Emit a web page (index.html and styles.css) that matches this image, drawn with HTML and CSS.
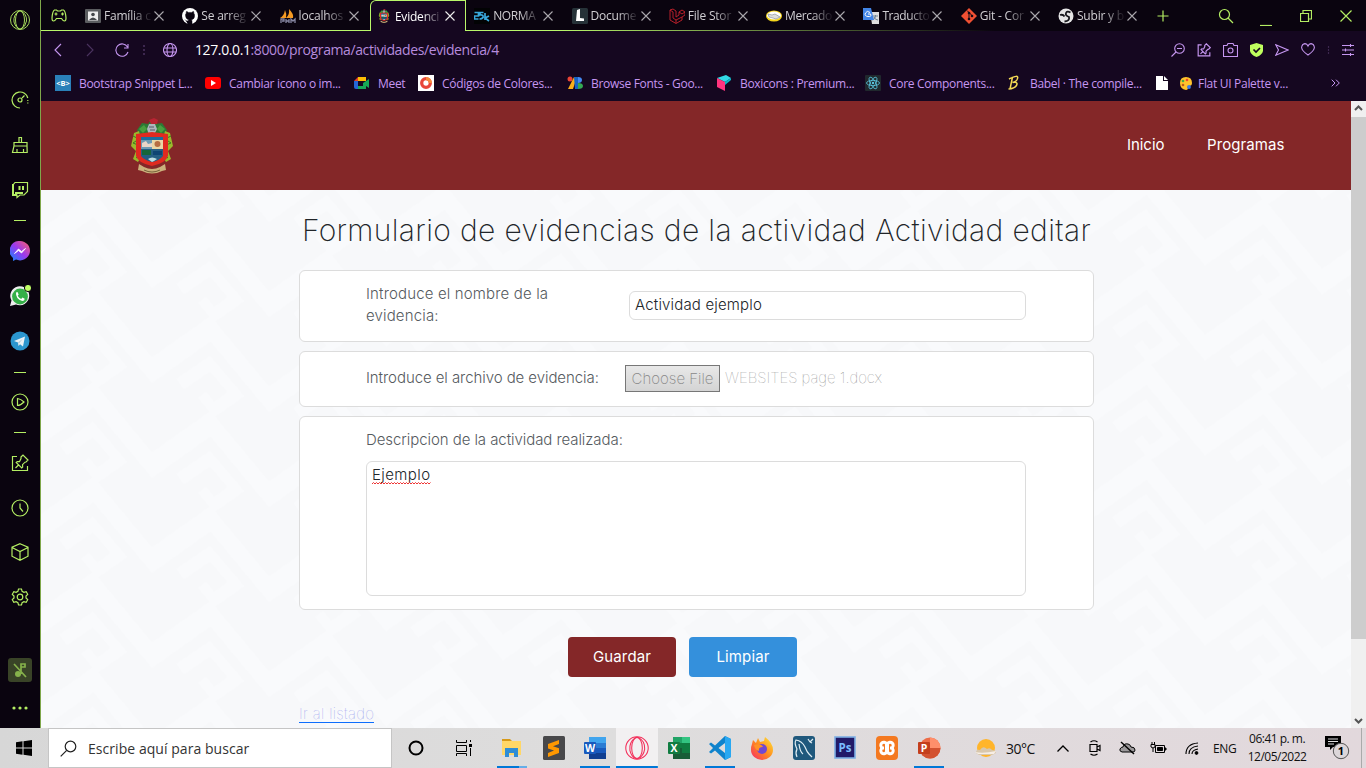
FILE: index.html
```html
<!DOCTYPE html>
<html lang="es">
<head>
<meta charset="utf-8">
<title>Evidencias</title>
<link rel="stylesheet" href="styles.css">
</head>
<body>
<svg class="defs" width="0" height="0">
  <defs>
    <symbol id="x" viewBox="0 0 12 12"><path d="M1.5 1.5l9 9M10.500 1.500l-9 9"/></symbol>
    <symbol id="pin" viewBox="0 0 18 18"><path d="M6 2.500H1.500v14h15V12M10 3l2-2 5 5-2 2-1 .2-2.500 2.500.2 2.300-1 1-5.500-5.500 1-1 2.300.2L10 4.500zM8 10.500l-3.500 3.500"/></symbol>
    <linearGradient id="msg" x1="0" y1="1" x2="1" y2="0"><stop offset="0" stop-color="#0a8dff"/><stop offset=".5" stop-color="#9a38ef"/><stop offset="1" stop-color="#ff6265"/></linearGradient>
    <linearGradient id="ff" x1="1" y1="0" x2="0" y2="1"><stop offset="0" stop-color="#ffe93b"/><stop offset=".5" stop-color="#ff8a1e"/><stop offset="1" stop-color="#f5246b"/></linearGradient>
    <symbol id="crest" viewBox="0 0 42 56">
      <path d="M6 12L11 5l6 1 4-5 4 5 6-1 5 7-4 6H9z" fill="#2c7a35"/>
      <path d="M8 11l5-4 3 4-4 4zM34 11l-5-4-3 4 4 4z" fill="#49a03f"/>
      <path d="M3 15l5-2 2 8-3 9 3 9-3 5-5-3 3-8-5-5zM39 15l-5-2-2 8 3 9-3 9 3 5 5-3-3-8 5-5z" fill="#9bb82c"/>
      <path d="M2 18l6 3-6 4 5 2M40 18l-6 3 6 4-5 2M5 40l4-3M37 40l-4-3" stroke="#3e7b22" fill="none"/>
      <path d="M18 2l5-2 4 2-1 4h-6z" fill="#b92432"/><path d="M18 6h6l2 5-3 6h-5l-2-6z" fill="#aeb6bd"/><path d="M18 9h5M19 12h5" stroke="#555a66"/>
      <path d="M5 16l16-2 16 2v22q-2 7-16 10Q7 45 5 38z" fill="#df2a20"/>
      <path d="M10 19h22v19q-4 5-11 6-8-2-11-6z" fill="#245e83"/>
      <path d="M10 20h11v11H10z" fill="#6c9ab3"/><path d="M21 21h11v10H21z" fill="#e9d7a5"/><path d="M10 19h22v3H10z" fill="#1c6c9e"/><path d="M11 25l4-2 2 3 4-1v4H11z" fill="#e8d5c7"/>
      <circle cx="26.500" cy="26" r="3" fill="#b66e42"/><path d="M11 32h9v5H11z" fill="#17663a"/><path d="M22 33h9v4h-9z" fill="#0e4573"/><path d="M17 41q4-3 9 0l-3 2-2 1z" fill="#bcdde2"/>
      <path d="M8 46l5 3q8 4 16 0l5-3 1 6-4 1q-10 5-20 0l-4-1z" fill="#cbb17c"/><path d="M13 52q8 4 16 0" stroke="#75613b" fill="none"/>
    </symbol>
    <symbol id="opera" viewBox="0 0 22 22"><circle cx="11" cy="11" r="9.500"/><ellipse cx="11" cy="11" rx="4.500" ry="9"/><path d="M10 2q-6 4-5 11 1 5 5 7M12 2q6 3 5.500 10-1 6-5.500 8"/></symbol>
  </defs>
</svg>
<div class="screen">
  <div class="browser">
    <aside class="side">
      <svg class="ic thin" width="22" height="22"><use href="#opera"/></svg>
      <span></span>
      <svg class="ic" width="18" height="18" viewBox="0 0 18 18"><path d="M9 17A8 8 0 1 1 16.800 7M11 7l2.500-2.500"/><circle cx="9" cy="9" r="2"/><path d="M16.800 9v5" stroke-dasharray="1 1.500"/></svg>
      <svg class="ic" width="18" height="18" viewBox="0 0 18 18"><path d="M3 6.500h13V10l.2 6.500H1.500L3 10zM3 10h13M8 6V1.500h2.500V6M6 16v-3M12.500 16v-3"/></svg>
      <svg class="ic" width="18" height="18" viewBox="0 0 18 18"><path d="M4 1.500h12.500v9L13 14H9l-3 2.500V14H2V4z"/><path d="M2 3v11h4M8.500 5v4M12 5v4M4 12h8" stroke-width="2"/></svg>
      <i class="sep"></i>
      <svg width="20" height="20" viewBox="0 0 20 20"><path d="M10 0a10 9.700 0 1 1-4 18.600L3 20v-3A9.700 9.700 0 0 1 10 0z" fill="url(#msg)"/><path d="M4.500 12.500L8.500 8l3 2.500 4-3L11.500 12l-3-2.500z" fill="#fff" stroke="#fff" stroke-width=".8"/></svg>
      <svg width="22" height="22" viewBox="0 0 22 22"><path d="M1 21l1.500-5.500A9.500 9.500 0 1 1 7 19.500z" fill="#eee"/><circle cx="11" cy="11.500" r="7.900" fill="#35b048"/><path d="M7 7.500l1.500-.5 1.200 2.500-1 1.200q1.200 2.200 3.500 3.200l1.200-1.300 2.300 1.200q0 2.200-2.500 2.200-6.700-2-6.200-8.500z" fill="#fff"/><circle cx="19" cy="3" r="3.600" fill="#c0ff66" stroke="#0a040f"/></svg>
      <svg width="20" height="20" viewBox="0 0 20 20"><circle cx="10" cy="10" r="9.500" fill="#2b96cf"/><path d="M4 10l11-4.500-2 10-3-2.200L8.500 15 8 11.500z" fill="#e9f2f7"/><path d="M8 11.500l5-4-4 5" fill="#b7ccda"/></svg>
      <i class="sep"></i>
      <svg class="ic" width="18" height="18" viewBox="0 0 18 18"><circle cx="9" cy="9" r="8"/><path d="M6.500 5.500v7q3 0 6.500-3.500-3-3-6.500-3.500z"/></svg>
      <i class="sep"></i>
      <svg class="ic" width="18" height="18"><use href="#pin"/></svg>
      <svg class="ic" width="18" height="18" viewBox="0 0 18 18"><circle cx="9" cy="9" r="8"/><path d="M9 4.500V9l3 3.500"/></svg>
      <svg class="ic" width="18" height="18" viewBox="0 0 18 18"><path d="M9 .7l8 3.500v9L9 17.300 1 13.200v-9zM1 4.500l8 4 8-4M9 8.500V17"/></svg>
      <svg class="ic" width="18" height="18" viewBox="0 0 18 18"><path d="M7.500 1h3l.6 2.300 1.800 1 2.300-.6 1.500 2.600L15 8v2l1.700 1.700-1.500 2.600-2.300-.6-1.800 1-.6 2.300h-3l-.6-2.300-1.800-1-2.300.6-1.500-2.600L3 10V8L1.300 6.300l1.500-2.600 2.300.6 1.800-1z"/><circle cx="9" cy="9" r="2.800"/></svg>
      <span></span>
      <div class="mute"><svg width="16" height="16" viewBox="0 0 16 16"><circle cx="6" cy="12" r="3" fill="#86b14b"/><path d="M9 12V2h4v3H9M2 2l12 13" stroke="#86b14b" stroke-width="1.700" fill="none"/></svg></div>
      <svg width="18" height="4" viewBox="0 0 18 4" fill="#b4ee63"><circle cx="3" cy="2" r="1.600"/><circle cx="9" cy="2" r="1.600"/><circle cx="15" cy="2" r="1.600"/></svg>
    </aside>
    <main class="window">
      <div class="tabs">
        <svg class="ic pad" width="16" height="14" viewBox="0 0 16 14"><path d="M3.500 1h2l1 1h3l1-1h2q2 1 2.500 8 0 3-1.500 3-1.500 0-3-2.500h-5Q4 12 2.500 12 1 12 1 9 1.500 2 3.500 1zM3.500 5h3M5 3.500v3M10 5h3M11.500 3.500v3"/></svg>
        <div class="tab"><svg width="16" height="16" viewBox="0 0 16 16"><rect y="1" width="16" height="14" rx="1" fill="#5b5d60"/><rect x="3" y="3.500" width="10" height="9" fill="#eee"/><circle cx="8" cy="6.500" r="1.800" fill="#44474a"/><path d="M4 12q4-5 8 0z" fill="#44474a"/></svg><span>Família c</span><svg class="x"><use href="#x"/></svg></div>
        <div class="tab"><svg width="16" height="16" viewBox="0 0 16 16"><circle cx="8" cy="8" r="8" fill="#fff"/><path d="M6 16v-3q-2 .5-3-1.500M10 16v-3l-.5-1.200Q13 11 12.500 7q0-1-.8-1.800.2-1-.1-1.700-1 0-1.800.9H6.300Q5.500 3.500 4.400 3.500q-.3.700-.1 1.700Q3.500 6 3.500 7q0 4 3.200 4.800L6 13v3z" fill="#0a0410" stroke="#0a0410" stroke-width=".5"/></svg><span>Se arreg</span><svg class="x"><use href="#x"/></svg></div>
        <div class="tab"><svg width="16" height="16" viewBox="0 0 16 16"><path d="M0 10q4-2 5-8 2 4 1 8zM6 10q4-4 3-9 5 5 4 9z" fill="#f59a23"/><path d="M1 15v-4h3v2H2M6 15v-4v2h3v-2 4M11 15v-4l2 2 2-2v4" stroke="#8787a2" fill="none" stroke-width="1.300"/></svg><span>localhos</span><svg class="x"><use href="#x"/></svg></div>
        <div class="tab active"><svg width="16" height="16"><use href="#crest" y="1" height="14"/></svg><span>Evidenci</span><svg class="x"><use href="#x"/></svg></div>
        <div class="tab"><svg width="16" height="16" viewBox="0 0 16 16"><rect width="16" height="16" fill="#020304"/><path d="M.5 4.500h4v3.500h-4v3h4M9.500 4.500H6V7q3.500-.5 3 2-.5 2-3.500 2M11 5v7M15 8l-4 2 4 3" fill="none" stroke="#39a9dc" stroke-width="1.700"/></svg><span class="tight">NORMA</span><svg class="x"><use href="#x"/></svg></div>
        <div class="tab"><svg width="16" height="16" viewBox="0 0 16 16"><rect width="16" height="16" rx="1.500" fill="#263238"/><path d="M5 2l3-1v9l4 .5V13H4z" fill="#fff"/></svg><span>Docume</span><svg class="x"><use href="#x"/></svg></div>
        <div class="tab"><svg width="16" height="16" viewBox="0 0 16 16"><path d="M1 2l3-1 3 2v6l3-2V4l3-2 3 2v3l-3 2v3l-6 3.500L1 12zM1 2l3 2v6l3 2 6-3M10 4l3 2 3-2M7 12v3" fill="none" stroke="#c9232c" stroke-width=".9"/></svg><span>File Stor</span><svg class="x"><use href="#x"/></svg></div>
        <div class="tab"><svg width="16" height="16" viewBox="0 0 16 16"><ellipse cx="8" cy="8" rx="8" ry="5.500" fill="#f5d51b"/><ellipse cx="8" cy="7.500" rx="7" ry="4" fill="#fff"/><path d="M2 6l4 1 3-1 5 3-4 2-3-1-4-1z" fill="#dedede" stroke="#7b858e" stroke-width=".6"/></svg><span class="tight">Mercado</span><svg class="x"><use href="#x"/></svg></div>
        <div class="tab"><svg width="16" height="16" viewBox="0 0 16 16"><path d="M7 4h9v12H9z" fill="#dedede"/><path d="M10 8h5M12.500 7v1q0 3-3 4M11 9q1 3 4 3" stroke="#718494" fill="none"/><path d="M0 0h8l3 12H0z" fill="#4285e8"/><path d="M7 4.500Q4 2 2.500 5T5 8.500 7.500 6H5" stroke="#fff" fill="none"/></svg><span class="tight">Traducto</span><svg class="x"><use href="#x"/></svg></div>
        <div class="tab"><svg width="16" height="16" viewBox="0 0 16 16"><path d="M8 0l8 8-8 8-8-8z" fill="#f05033"/><path d="M6 2.500l5.500 5.500M8 5v7" stroke="#140c17"/><g fill="#140c17"><circle cx="8" cy="5" r="1.300"/><circle cx="8" cy="11" r="1.300"/><circle cx="11" cy="8" r="1.300"/></g></svg><span>Git - Cor</span><svg class="x"><use href="#x"/></svg></div>
        <div class="tab"><svg width="16" height="16" viewBox="0 0 16 16"><circle cx="8" cy="8" r="7.500" fill="#e6e6e6"/><path d="M12.500 4.500Q9 2.500 8 5t3 4q1 4-4.500 4.500M2 7q3-1 4.500 1.500" fill="none" stroke="#17171c" stroke-width="1.800"/></svg><span>Subir y b</span><svg class="x"><use href="#x"/></svg></div>
        <div class="controls ic">
          <svg width="12" height="12" viewBox="0 0 12 12"><path d="M6 .5v11M.5 6h11"/></svg>
          <svg width="16" height="16" viewBox="0 0 16 16"><circle cx="6.500" cy="6.500" r="5"/><path d="M10 10l5 5"/></svg>
          <svg width="12" height="12" viewBox="0 0 12 12"><path d="M0 11.500h12"/></svg>
          <svg width="12" height="12" viewBox="0 0 12 12"><path d="M.5 3.500h8v8h-8zM3 3.500v-3h8.500V9h-3"/></svg>
          <svg width="12" height="12" viewBox="0 0 12 12"><path d="M.5.5l11 11M11.500.5l-11 11"/></svg>
        </div>
      </div>
      <div class="address">
        <svg width="8" height="14" viewBox="0 0 8 14"><path d="M7 1L1 7l6 6"/></svg>
        <svg class="dim" width="8" height="14" viewBox="0 0 8 14"><path d="M1 1l6 6-6 6"/></svg>
        <svg width="14" height="14" viewBox="0 0 14 14"><path d="M12.500 4A6.200 6.200 0 1 0 13 9M13 1v4H9"/></svg>
        <svg class="dim" width="4" height="12" viewBox="0 0 4 12"><path d="M2 1v10" stroke-width="1.500" stroke-dasharray="2 2"/></svg>
        <svg width="14" height="14" viewBox="0 0 14 14"><circle cx="7" cy="7" r="6.500"/><ellipse cx="7" cy="7" rx="3" ry="6.500"/><path d="M1 5h12M1 9h12"/></svg>
        <span class="url"><b>127.0.0.1</b>:8000/programa/actividades/evidencia/4</span>
        <div class="tools">
          <svg width="14" height="14" viewBox="0 0 14 14"><circle cx="8.500" cy="5.500" r="4.800"/><path d="M5 9L.5 13.500M6 5.500h5"/></svg>
          <svg class="bold" width="14" height="14"><use href="#pin"/></svg>
          <svg width="15" height="14" viewBox="0 0 15 14"><path d="M.5 2.500H4L5 .5h5l1 2h3.500v11H.500z"/><circle cx="7.500" cy="7.500" r="2.500"/></svg>
          <svg width="13" height="14" viewBox="0 0 13 14"><path d="M6.500 0L13 2v6q-1 4-6.500 6Q1 12 0 8V2z" fill="#c0ff5e" stroke="none"/><path d="M3.500 6.500L6 9l4-4" stroke="#150720" stroke-width="1.700"/></svg>
          <svg width="14" height="12" viewBox="0 0 14 12"><path d="M.8.8L13 6 .8 11.200 3.500 6z"/></svg>
          <svg width="14" height="13" viewBox="0 0 14 13"><path d="M7 12Q1 8 .6 4.500 1 1 4 .6 6 .7 7 3 8 .7 10 .6q3 .4 3.400 3.900Q13 8 7 12z"/></svg>
          <svg class="dim" width="3" height="12" viewBox="0 0 4 12"><path d="M2 1v10" stroke-width="1.500" stroke-dasharray="2 2"/></svg>
          <svg width="12" height="12" viewBox="0 0 12 12"><path d="M0 1.500h12M0 6h12M0 10.500h12M8.500 0v3M3.500 4.500v3M8.500 9v3"/></svg>
        </div>
      </div>
      <div class="marks">
        <div class="mark w150"><svg width="16" height="16" viewBox="0 0 16 16"><rect width="16" height="16" fill="#2a80b9"/><text x="8" y="11" text-anchor="middle" font-size="7.500" letter-spacing="0" font-weight="bold" fill="#fff">&lt;B&gt;</text></svg><span>Bootstrap Snippet L...</span></div>
        <div class="mark w149"><svg width="16" height="16" viewBox="0 0 16 16"><rect y="2" width="16" height="12" rx="3" fill="#f00"/><path d="M6 5l5 3-5 3z" fill="#fff"/></svg><span>Cambiar icono o im...</span></div>
        <div class="mark w64"><svg width="16" height="16" viewBox="0 0 16 16"><path d="M0 6l4-4v4z" fill="#e33e2b"/><path d="M4 2h8v4H4z" fill="#fbbc04"/><path d="M0 6h4v8H2q-2 0-2-2z" fill="#2467d6"/><path d="M4 11h5V8l6-4v9l-3-2v3H4z" fill="#16a857"/></svg><span>Meet</span></div>
        <div class="mark w149b"><svg width="16" height="16" viewBox="0 0 16 16"><rect width="16" height="16" fill="#fff"/><circle cx="8" cy="8" r="4.300" fill="none" stroke="#e8463a" stroke-width="3.300"/><path d="M8 3.700a4.300 4.300 0 0 1 4.300 4.300" stroke="#f58a3b" stroke-width="3.300" fill="none"/></svg><span>Códigos de Colores...</span></div>
        <div class="mark w149"><svg width="16" height="16" viewBox="0 0 16 16"><circle cx="3" cy="4" r="2.500" fill="#ea4335"/><path d="M7 2h3L6 14H1z" fill="#fbaf19"/><path d="M7 2h4v12H8z" fill="#1764c5"/><path d="M11 2q4 0 4 3t-4 3z" fill="#448af3"/><path d="M11 8q5 0 5 3t-5 3z" fill="#34a853"/></svg><span>Browse Fonts - Goo...</span></div>
        <div class="mark w149"><svg width="16" height="16" viewBox="0 0 16 16"><path d="M1 3l9-3 5 3-6 4z" fill="#31d9e5"/><path d="M1 3l8 4v9l-8-4z" fill="#ff347e"/><path d="M9 7l6-4v2L9 10z" fill="#0bb7c4"/></svg><span>Boxicons : Premium...</span></div>
        <div class="mark w141"><svg width="16" height="16" viewBox="0 0 16 16"><rect width="16" height="16" rx="1" fill="#20282d"/><g fill="none" stroke="#5bc6e0" stroke-width=".8"><ellipse cx="8" cy="8" rx="6.500" ry="2.600"/><ellipse cx="8" cy="8" rx="6.500" ry="2.600" transform="rotate(60 8 8)"/><ellipse cx="8" cy="8" rx="6.500" ry="2.600" transform="rotate(120 8 8)"/></g><circle cx="8" cy="8" r="1.200" fill="#5bc6e0"/></svg><span>Core Components...</span></div>
        <div class="mark w147"><svg width="16" height="16" viewBox="0 0 16 16"><path d="M6.500 2L4 14M3 4q10-5 8.500-.5-.5 3-5 4 6-1 4 3-2 3-8 3.500" stroke="#f5da55" stroke-width="1.500" fill="none"/></svg><span>Babel · The compile...</span></div>
        <div class="mark w25"><svg width="12" height="14" viewBox="0 0 12 14"><path d="M0 0h7v5h5v9H0zM8 0l4 4H8z" fill="#fff"/></svg></div>
        <div class="mark grow"><svg width="12" height="13" viewBox="0 0 12 13"><path d="M6 0q6 0 6 6 0 3-3 3-2 0-1 3-1 1-2 1Q0 12 0 6T6 0z" fill="#ffc22b"/><circle cx="3" cy="4" r="1.300" fill="#44ac46"/><circle cx="7" cy="3" r="1.300" fill="#e84632"/><circle cx="3" cy="8" r="1.300" fill="#bd5a1d"/><circle cx="9" cy="10" r="1.900" fill="#3b7de6"/></svg><span>Flat UI Palette v...</span></div>
        <svg class="more" width="9" height="8" viewBox="0 0 9 8"><path d="M.7.7L4 4 .7 7.300M5 .7L8.300 4 5 7.300"/></svg>
      </div>
      <div class="view">
        <div class="page">
          <svg class="pattern" width="1310" height="538">
            <defs><pattern id="greca" width="117" height="95" patternUnits="userSpaceOnUse" patternTransform="translate(-6 -8) skewY(14)">
              <rect width="117" height="95" fill="#f7f8fa"/>
              <g fill="none" stroke="#f9fafc" stroke-width="19"><path d="M-58.500 8L0 64 58.500 8 117 64 175.500 8M-58.500 103L0 159 58.500 103 117 159 175.500 103M-58.500-87L0-31 58.500-87 117-31 175.500-87"/><path d="M28 71L58 43 84 67 62 88 50 76" stroke-width="12"/></g>
            </pattern></defs>
            <rect width="1310" height="538" fill="url(#greca)"/>
          </svg>
          <nav class="nav"><svg width="42" height="56"><use href="#crest"/></svg><a class="n1">Inicio</a><a class="n2">Programas</a></nav>
          <form class="form">
            <h1><span>Formulario de evidencias de la actividad Actividad editar</span></h1>
            <section class="card c1"><label><span class="l1">Introduce el nombre de la</span><br><span class="l1">evidencia:</span></label><div class="input"><span>Actividad ejemplo</span></div></section>
            <section class="card c2"><label><span class="l3">Introduce el archivo de evidencia:</span></label><div class="choose"><span>Choose File</span></div><span class="file">WEBSITES page 1.docx</span></section>
            <section class="card c3"><label><span class="l3">Descripcion de la actividad realizada:</span></label><div class="area"><span class="typo">Ejemplo<svg width="60" height="3"><path d="M0 2l1.500-1.500L3 2l1.500-1.500L6 2l1.500-1.500L9 2l1.500-1.500L12 2l1.500-1.500L15 2l1.500-1.500L18 2l1.500-1.500L21 2l1.500-1.500L24 2l1.500-1.500L27 2l1.500-1.500L30 2l1.500-1.500L33 2l1.500-1.500L36 2l1.500-1.500L39 2l1.500-1.500L42 2l1.500-1.500L45 2l1.500-1.500L48 2l1.500-1.500L51 2l1.500-1.500L54 2l1.500-1.500L57 2l1.500-1.500" fill="none" stroke="#e33"/></svg></span></div></section>
            <div class="buttons"><div class="btn save"><span>Guardar</span></div><div class="btn clear"><span>Limpiar</span></div></div>
            <a class="list">Ir al listado</a>
          </form>
        </div>
        <div class="scroll"><svg width="15" height="16" viewBox="0 0 15 16"><path d="M4 9l3.500-3.500L11 9"/></svg><div class="thumb"></div><svg width="15" height="16" viewBox="0 0 15 16"><path d="M4 7l3.500 3.500L11 7"/></svg></div>
      </div>
    </main>
  </div>
  <footer class="task">
    <div class="cell start"><svg width="16" height="16" viewBox="0 0 16 16"><path d="M0 2.300L6.500 1.300v6.200H0zM7.500 1.200L16 0v7.500H7.500zM0 8.500h6.500v6.200L0 13.700zM7.500 8.500H16V16l-8.500-1.200z"/></svg></div>
    <div class="find"><svg width="17" height="17" viewBox="0 0 17 17"><circle cx="10.500" cy="6.500" r="5.300"/><path d="M6.700 10.300L.7 16.300"/></svg><span>Escribe aquí para buscar</span></div>
    <div class="cell"><svg width="16" height="16" viewBox="0 0 16 16"><circle cx="8" cy="8" r="6.500" fill="none" stroke="#000" stroke-width="2"/></svg></div>
    <div class="cell views"><svg class="line" width="16" height="16" viewBox="0 0 16 16"><path d="M.5 0v2.500h10V0M.5 5.500h10v6H.500zM.5 16v-2.500h10V16M14.500 0v2M14.500 8v8"/><path d="M13 4h3v3h-3z" fill="#000" stroke="none"/></svg></div>
    <div class="cell run exp"><svg width="22" height="20" viewBox="0 0 22 20"><path d="M1 1h8l2 2H1z" fill="#d79a19"/><path d="M1 3h19v14H1z" fill="#ffd767"/><path d="M4 10h13v9h-4v-4H8v4H4z" fill="#2f8dd5"/></svg></div>
    <div class="cell"><svg width="24" height="24" viewBox="0 0 24 24"><rect x="1" width="22" height="24" rx="1.500" fill="#48484a"/><path d="M6 8l11-4v4l-6 2.300 6 2V17L6 21v-4l6-2.500-6-2z" fill="#ff9800"/></svg></div>
    <div class="cell run"><svg width="22" height="22" viewBox="0 0 22 22"><path d="M5 0h17v6H5z" fill="#41a5ee"/><path d="M5 6h17v5H5z" fill="#2b7cd3"/><path d="M5 11h17v5H5z" fill="#185abd"/><path d="M5 16h17v6H5z" fill="#103f91"/><rect y="5" width="12" height="12" rx="1" fill="#185abd"/><text x="6" y="15" font-size="10.500" text-anchor="middle" font-weight="bold" fill="#fff">W</text></svg></div>
    <div class="cell run current"><svg class="red" width="26" height="26"><use href="#opera"/></svg></div>
    <div class="cell"><svg width="22" height="22" viewBox="0 0 22 22"><path d="M5 0h17v6H5z" fill="#33c481"/><path d="M5 0h9v6H5z" fill="#21a366"/><path d="M5 6h17v5H5z" fill="#107c41"/><path d="M5 11h17v5H5z" fill="#185c37"/><path d="M14 11h8v5h-8z" fill="#107c41"/><path d="M5 16h17v6H5z" fill="#185c37"/><rect y="5" width="12" height="12" rx="1" fill="#107c41"/><text x="6" y="15" font-size="10.500" text-anchor="middle" font-weight="bold" fill="#fff">X</text></svg></div>
    <div class="cell run"><svg width="24" height="24" viewBox="0 0 24 24"><path d="M17 0L7 9.500 3 6.500 1 8l4 4-4 4 2 1.500 4-3L17 24l6-3V3zM17 7v10l-6.500-5z" fill="#0f83cc" fill-rule="evenodd"/><path d="M17 0l6 3v18l-6 3z" fill="#29a8f2"/></svg></div>
    <div class="cell"><svg width="24" height="24" viewBox="0 0 24 24"><path d="M2 8l1-4 3 3 2-5 2 4 4-1 1-4q8 6 8 13a11 10 0 0 1-22 0q0-4 1-6z" fill="url(#ff)"/><circle cx="12" cy="13" r="5" fill="#7048d2"/><path d="M4 9q7-2 9 2-5 0-4 4-4-1-5-6z" fill="#ff9227"/></svg></div>
    <div class="cell"><svg width="24" height="24" viewBox="0 0 24 24"><rect x="1" width="22" height="24" rx="3" fill="#1f587c"/><path d="M5 21Q3 17 5 13 2 7 4 4q6 1 9 7 2 5 4 7l3 3M7 8q1 8 4 10M16 3l2 3M21 3l-3 3M18 6l2 1" fill="none" stroke="#dfedf3" stroke-width="1.200"/></svg></div>
    <div class="cell"><svg width="22" height="24" viewBox="0 0 22 24"><rect x="1" y="1" width="20" height="21" fill="#211a68" stroke="#7eafe4" stroke-width="1.600"/><text x="11" y="16" font-size="11.500" text-anchor="middle" font-weight="bold" fill="#79bcff">Ps</text></svg></div>
    <div class="cell"><svg width="24" height="24" viewBox="0 0 24 24"><rect x="1" width="22" height="24" rx="4" fill="#f47920"/><g fill="none" stroke="#fff" stroke-width="3"><path d="M9 12H7.500a3 3 0 1 1 4-4v2.500h1V8a3 3 0 1 1 4 4H15M9 12H7.500a3 3 0 1 0 4 4v-2.500h1V16a3 3 0 1 0 4-4"/></g></svg></div>
    <div class="cell run"><svg width="24" height="24" viewBox="0 0 24 24"><circle cx="13" cy="12" r="10.500" fill="#ed6c47"/><path d="M13 1.500A10.500 10.500 0 0 1 23.500 12H13z" fill="#ff8f6b"/><path d="M2.500 12h21a10.500 10.500 0 0 1-21 0z" fill="#d35230"/><rect x="1" y="6" width="12" height="12" rx="1" fill="#c43e1c"/><text x="7" y="16" font-size="10.500" text-anchor="middle" font-weight="bold" fill="#fff">P</text></svg></div>
    <div class="cell weather"><svg width="22" height="20" viewBox="0 0 22 20"><circle cx="11" cy="10" r="9" fill="#ffb52b"/><path d="M1 15q0-4 4-3 3-5 7-1 3-2 5 1 4 0 4 3-3 2-5 2H4z" fill="#d8c7ad"/><path d="M0 14q8 2 21-1l-2 3H3z" fill="#f7eee5"/></svg></div>
    <div class="temp"><span>30°C</span></div>
    <div class="cell"><svg class="line" width="12" height="7" viewBox="0 0 12 7"><path d="M.5 6.500L6 1l5.500 5.500" stroke-width="1.300"/></svg></div>
    <div class="cell"><svg class="line" width="12" height="16" viewBox="0 0 12 16"><path d="M1 4.500h7v7H1zM8 7l3-1.500v5L8 9M1.500 2Q5-.5 8.500 2M1.500 14q3.500 2.500 7 0" stroke-width="1.200"/></svg></div>
    <div class="cell"><svg class="line" width="17" height="14" viewBox="0 0 17 14"><path d="M3 11Q0 10 1 8q1-2 3-2 1-4 5-3 2 0 3 3 4 0 4 3 0 2-2 2z" fill="#9c999b"/><path d="M2 1l13 12" stroke-width="1.400"/></svg></div>
    <div class="cell"><svg class="line" width="17" height="14" viewBox="0 0 17 14"><path d="M5.500 4.500h9v7h-9z"/><path d="M7.500 6.500h5v3h-5zM15 7h1v2h-1z" fill="#000"/><path d="M1 3.500h4V6q-2 2-4 0zM2 1v2M4.500 1v2M3 7v4"/></svg></div>
    <div class="cell"><svg class="line" width="14" height="13" viewBox="0 0 14 13"><path d="M1 12Q1 2 13 1M4 12q0-7 9-8M7 12q0-4 6-5" stroke-width="1.100"/><circle cx="11.500" cy="11" r="1.400" fill="#000"/></svg></div>
    <div class="lang"><span>ENG</span></div>
    <div class="clock"><span class="t">06:41 p. m.</span><span class="d">12/05/2022</span></div>
    <div class="cell note"><svg width="25" height="26" viewBox="0 0 25 26"><path d="M0 1h16v11H8l-3 3v-3H0z"/><path d="M3 4h10M3 6.500h10M3 9h6" stroke="#ddd"/><circle cx="16" cy="16" r="7.700" fill="#dcd6d9" stroke="#555"/><text x="16" y="20" text-anchor="middle" font-size="11" font-weight="bold">1</text></svg></div>
    <div class="edge"></div>
  </footer>
</div>
</body>
</html>
```
FILE: styles.css
```css
* { box-sizing: border-box; }
body { margin: 0; overflow: hidden; font-family: "Open Sans", "Noto Sans", sans-serif; }
svg { display: block; flex: none; }
svg text { font-family: "Open Sans", sans-serif; }
.defs { position: absolute; }
.screen { width: 1366px; height: 768px; display: grid; grid-template-rows: 728px 40px; }
.browser { display: grid; grid-template-columns: 40px 1326px; background: #0a040f; }
.ic { fill: none; stroke: #b4ee63; stroke-width: 1.2; }
.thin { stroke-width: .9; }
.side { display: grid; justify-items: center; align-items: center; grid-template-rows: 40px 38px 44px 46px 44px 16px 46px 44px 46px 16px 44px 16px 46px 44px 44px 46px 28px 44px 32px; }
.sep { width: 12px; height: 1px; background: #b4ee63; }
.mute { width: 24px; height: 24px; border-radius: 3px; background: #394327; display: grid; place-items: center; }

.window { display: grid; grid-template-rows: 31px 35px 35px 627px; border-left: 1px solid #7fa74b; background: #150720; }
.tabs { display: flex; align-items: center; width: 1325px; height: 31px; background: linear-gradient(90deg, #b9f76a 0 39%, #b9f76a00 72%) bottom/100% 1px no-repeat #0a040f; }
.pad { margin: 0 17px 0 10px; }
.tab { display: flex; flex: none; align-items: center; width: 97.3px; height: 30px; padding-left: 9px; }
.tab:nth-child(2) { margin-left: -8px; }
.tab span { width: 49px; margin-left: 3px; white-space: nowrap; font-size: 12px; letter-spacing: -.2px; color: #d0ced2; -webkit-mask: linear-gradient(90deg, #000 55%, #0002 92%); mask: linear-gradient(90deg, #000 55%, #0002 92%); }
.tab .tight { letter-spacing: -.4px; }
.x { width: 12px; height: 12px; fill: none; stroke: #aaa8ad; stroke-width: 1.1; }
.tab.active { height: 31px; width: 96px; margin: 0 -.7px 0 2px; padding-left: 5px; background: #150720; border: 1px solid #b9f76a; border-bottom: 0; border-top-left-radius: 6px; }
.active span { color: #fff; }
.active .x { stroke: #eee; }
.controls { display: flex; align-items: center; height: 30px; margin-left: 11px; }
.controls svg:nth-child(2) { margin-left: 49px; }
.controls svg:nth-child(3) { margin-left: 26px; margin-top: 9px; }
.controls svg:nth-child(n+4) { margin-left: 28px; }

.address { display: flex; align-items: center; height: 37px; padding-left: 13px; fill: none; stroke: #c596f0; stroke-width: 1.1; }
.address > svg:nth-child(2) { margin-left: 24px; }
.address > svg:nth-child(3) { margin-left: 21px; }
.address > svg:nth-child(4) { margin-left: 13px; }
.address > svg:nth-child(5) { margin-left: 17px; }
.dim { opacity: .3; }
.bold { stroke-width: 1.5; }
.url { margin-left: 18px; width: 320px; white-space: nowrap; font-size: 14px; letter-spacing: -.39px; color: #b68bdd; }
.url b { font-weight: 400; color: #fff; }
.tools { display: flex; align-items: center; margin-left: auto; margin-right: 12px; gap: 12px; }

.marks { display: flex; align-items: center; padding-left: 14px; padding-bottom: 1px; }
.mark { display: flex; flex: none; align-items: center; white-space: nowrap; color: #c596f0; font-size: 12px; letter-spacing: -.3px; }
.mark span { margin-left: 8px; }
.w150 { width: 150px; } .w149 { width: 149px; } .w64 { width: 64px; } .w149b { width: 149px; } .w141 { width: 141px; } .w147 { width: 150px; } .w25 { width: 24px; }
.grow span { margin-left: 6px; }
.more { margin-left: auto; margin-right: 26px; fill: none; stroke: #c596f0; }

.view { display: grid; grid-template-columns: 1310px 15px; height: 627px; }
.page { position: relative; background: #f9fafc; font-family: Inter, sans-serif; font-weight: 300; font-size: 15px; color: #212529; overflow: hidden; }
.pattern { position: absolute; left: 0; top: 89px; }
.nav { position: relative; display: flex; align-items: center; height: 89px; padding-left: 90px; background: #842728; color: #fff; font-weight: 400; white-space: nowrap; }
.n1 { width: 80px; margin-left: 954px; margin-top: -3px; letter-spacing: -.05px; }
.n2 { margin-top: -3px; letter-spacing: .1px; }
.form { position: relative; width: 795px; margin-left: 258px; }
h1 { margin: 0; height: 80px; padding-top: 20px; line-height: 40px; text-align: center; font-size: 30px; font-weight: 200; letter-spacing: .36px; white-space: nowrap; }
.card { display: flex; border: 1px solid #dcdcdc; border-radius: 6px; background: #fff; padding-left: 66px; line-height: 22px; color: #555a5e; white-space: nowrap; }
.c1 { height: 72px; padding-top: 12px; }
.c1 label { width: 263px; }
.l1 { letter-spacing: .15px; }
.l3 { letter-spacing: -.07px; }
.input { width: 397px; height: 29px; margin-top: 8px; padding: 2px 5px; border: 1px solid #dcdcdc; border-radius: 6px; color: #212529; letter-spacing: .17px; }
.c2 { height: 56px; margin-top: 9px; align-items: center; padding-bottom: 2px; }
.c2 label { width: 259px; }
.choose { width: 95px; height: 27px; border: 1px solid #777; background: linear-gradient(#e8e8e8, #d4d4d4); text-align: center; line-height: 25px; color: #888; font-weight: 200; }
.file { margin-left: 5px; color: #888; font-weight: 100; }
.c3 { flex-direction: column; height: 194px; margin-top: 9px; padding-top: 12px; }
.area { width: 660px; height: 135px; margin-top: 10px; padding: 2px 5px; border: 1px solid #dcdcdc; border-radius: 6px; color: #212529; letter-spacing: .4px; }
.typo { position: relative; }
.typo svg { position: absolute; left: 0; bottom: -1px; }
.buttons { display: flex; gap: 13px; margin: 27px 0 0 269px; }
.btn { width: 108px; height: 40px; border-radius: 4px; line-height: 39px; text-align: center; color: #fff; font-weight: 400; letter-spacing: .15px; }
.save { background: #842728; }
.clear { background: #3490dc; }
.list { display: block; width: 75px; height: 18px; margin-top: 28px; line-height: 18px; font-weight: 100; letter-spacing: .33px; color: #8f96ee; white-space: nowrap; border-bottom: 1px solid #0d6efd; }
.scroll { display: grid; grid-template-rows: 16px 522px 1fr; background: #f0f0f0; fill: none; stroke: #555; stroke-width: 2; }
.scroll svg:last-child { align-self: end; }
.thumb { background: #cdcdcd; }

.task { display: grid; grid-template-columns: 48px 343.5px 49px 50.5px repeat(11, 41.7px) 56.5px 41px 32px 32px 32px 31px 36px 33px 68px 50px 1fr; background: linear-gradient(90deg, #d7d7d7, #dedddd 45%, #e2d8dc); color: #111; font-size: 14px; white-space: nowrap; }
.cell { display: grid; place-items: center; height: 40px; }
.views { padding-right: 4px; }
.line { fill: none; stroke: #000; }
.find { display: flex; align-items: center; background: #fff; border: 1px solid #c5c5c5; padding-left: 11px; fill: none; stroke: #222; stroke-width: 1.2; }
.find span { margin-left: 11px; letter-spacing: .05px; color: #333; }
.run { background: linear-gradient(#0078d7, #0078d7) bottom/30px 2px no-repeat; }
.exp { background: linear-gradient(90deg, #0078d7 22px, #65aee8 22px) bottom/30px 2px no-repeat; }
.current { background: linear-gradient(#0078d7, #0078d7) bottom/100% 2px no-repeat #f2f0f1; }
.red { fill: none; stroke: #f3305b; stroke-width: .9; }
.weather { justify-items: end; padding-right: 9px; }
.temp, .lang { display: flex; align-items: center; }
.temp { letter-spacing: -.5px; }
.lang { font-size: 12px; padding-left: 3px; letter-spacing: -.4px; }
.clock { font-size: 12px; display: flex; flex-direction: column; align-items: center; justify-content: center; line-height: 18px; letter-spacing: -.5px; }
.note { padding-left: 2px; }
.edge { border-left: 1px solid #aaa; }
```
